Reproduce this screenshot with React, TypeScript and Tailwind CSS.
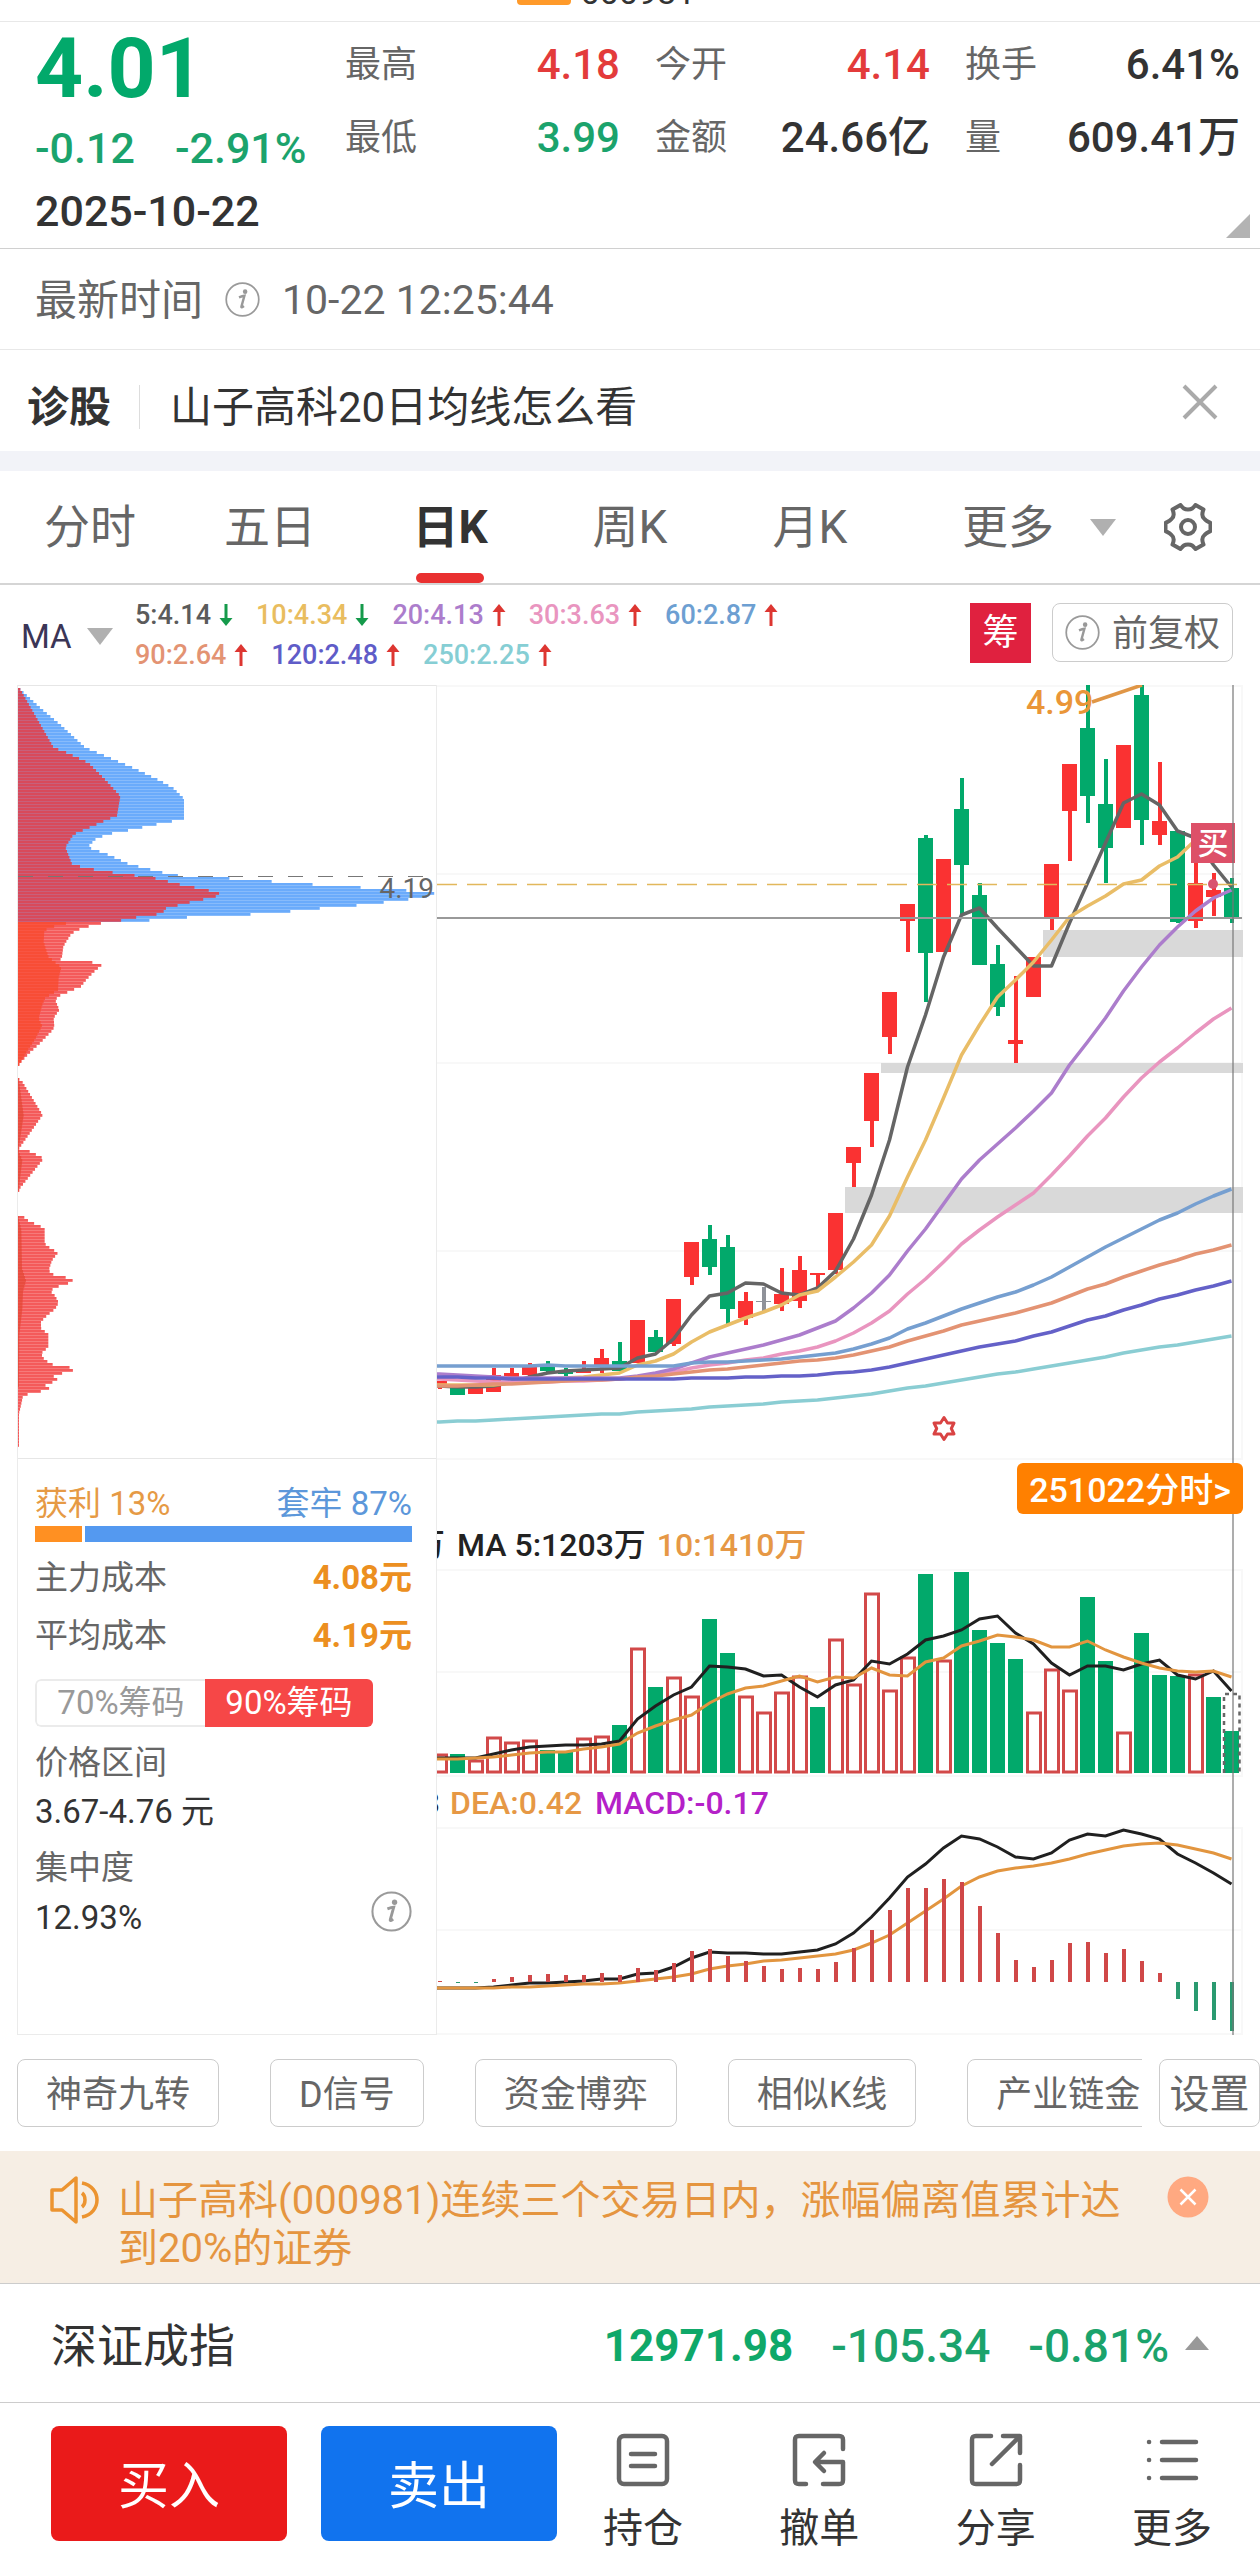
import { ReactNode } from "react";

type Candle = [color: string, top: number, bottom: number, high: number, low: number];

const RED = "#fa3232";
const GREEN = "#02a96b";
const GRAY = "#8f9299";

const candles: Candle[] = [
  [RED, 1381, 1384, 1381, 1389],
  [GREEN, 1387, 1395, 1387, 1395],
  [RED, 1388, 1394, 1388, 1394],
  [RED, 1375, 1392, 1368, 1392],
  [RED, 1373, 1377, 1368, 1380],
  [RED, 1367, 1375, 1363, 1376],
  [GREEN, 1366, 1371, 1361, 1373],
  [GREEN, 1372, 1374, 1368, 1376],
  [RED, 1369, 1373, 1361, 1373],
  [RED, 1358, 1366, 1349, 1373],
  [GREEN, 1361, 1371, 1342, 1371],
  [RED, 1320, 1363, 1320, 1363],
  [GREEN, 1337, 1352, 1330, 1352],
  [RED, 1299, 1344, 1299, 1346],
  [RED, 1242, 1277, 1242, 1285],
  [GREEN, 1239, 1267, 1225, 1275],
  [GREEN, 1247, 1309, 1235, 1324],
  [RED, 1301, 1318, 1292, 1325],
  [GRAY, 1301, 1302, 1287, 1311],
  [RED, 1294, 1304, 1268, 1311],
  [RED, 1270, 1301, 1256, 1308],
  [RED, 1273, 1275, 1273, 1287],
  [RED, 1213, 1270, 1213, 1274],
  [RED, 1147, 1163, 1147, 1187],
  [RED, 1073, 1121, 1073, 1147],
  [RED, 992, 1037, 992, 1054],
  [RED, 904, 921, 904, 952],
  [GREEN, 838, 953, 835, 1002],
  [RED, 859, 952, 859, 952],
  [GREEN, 809, 865, 778, 916],
  [GREEN, 895, 965, 883, 965],
  [GREEN, 964, 1007, 945, 1016],
  [RED, 1040, 1044, 976, 1063],
  [RED, 957, 997, 957, 997],
  [RED, 864, 918, 864, 930],
  [RED, 764, 811, 764, 861],
  [GREEN, 728, 796, 685, 823],
  [GREEN, 804, 848, 759, 883],
  [RED, 745, 828, 745, 828],
  [GREEN, 695, 820, 685, 845],
  [RED, 821, 835, 762, 845],
  [GREEN, 831, 922, 831, 923],
  [RED, 883, 921, 850, 928],
  [RED, 890, 897, 873, 916],
  [GREEN, 888, 919, 878, 923],
];

const maLines = [
  { color: "#8acdd3", ys: [1422, 1421, 1421, 1420, 1419, 1418, 1417, 1416, 1415, 1414, 1414, 1412, 1411, 1410, 1409, 1407, 1406, 1405, 1404, 1402, 1401, 1400, 1398, 1396, 1394, 1391, 1388, 1386, 1383, 1380, 1377, 1374, 1372, 1369, 1366, 1363, 1360, 1357, 1353, 1350, 1347, 1345, 1342, 1339, 1336] },
  { color: "#656565", ys: [1386, 1387, 1387, 1386, 1382, 1377, 1373, 1371, 1370, 1369, 1368, 1358, 1354, 1339, 1315, 1296, 1293, 1283, 1284, 1293, 1295, 1288, 1271, 1239, 1195, 1140, 1067, 1015, 957, 915, 908, 928, 947, 966, 966, 923, 883, 843, 803, 794, 805, 831, 838, 865, 887] },
  { color: "#e9bd67", ys: [1385, 1385, 1385, 1385, 1383, 1381, 1379, 1378, 1377, 1375, 1373, 1365, 1361, 1354, 1342, 1332, 1325, 1318, 1312, 1305, 1295, 1291, 1277, 1262, 1245, 1216, 1177, 1140, 1098, 1055, 1025, 997, 980, 962, 940, 917, 906, 896, 884, 880, 866, 857, 840, 839, 840] },
  { color: "#e995bf", ys: [1379, 1380, 1381, 1382, 1382, 1382, 1382, 1381, 1381, 1380, 1379, 1377, 1375, 1372, 1368, 1365, 1363, 1360, 1358, 1354, 1351, 1347, 1341, 1333, 1323, 1311, 1294, 1279, 1262, 1244, 1230, 1217, 1205, 1193, 1175, 1156, 1136, 1118, 1097, 1078, 1062, 1048, 1033, 1019, 1008] },
  { color: "#ac7dcc", ys: [1374, 1375, 1376, 1377, 1378, 1378, 1378, 1378, 1378, 1378, 1378, 1376, 1373, 1369, 1363, 1357, 1353, 1349, 1345, 1340, 1335, 1328, 1321, 1308, 1293, 1275, 1251, 1229, 1204, 1179, 1160, 1144, 1128, 1111, 1093, 1065, 1042, 1018, 991, 967, 945, 927, 911, 898, 890] },
  { color: "#769fd0", ys: [1366, 1366, 1366, 1366, 1366, 1366, 1365, 1366, 1366, 1366, 1366, 1366, 1366, 1366, 1363, 1362, 1362, 1361, 1360, 1359, 1357, 1355, 1353, 1349, 1344, 1338, 1329, 1323, 1316, 1309, 1303, 1297, 1292, 1285, 1277, 1267, 1257, 1247, 1238, 1229, 1220, 1213, 1204, 1196, 1189] },
  { color: "#e39373", ys: [1386, 1386, 1385, 1384, 1384, 1383, 1382, 1381, 1380, 1380, 1379, 1377, 1376, 1374, 1372, 1370, 1369, 1367, 1365, 1363, 1361, 1360, 1358, 1355, 1351, 1347, 1341, 1336, 1331, 1325, 1321, 1317, 1313, 1308, 1303, 1296, 1289, 1284, 1277, 1271, 1265, 1260, 1254, 1250, 1245] },
  { color: "#6461c8", ys: [1377, 1377, 1378, 1378, 1379, 1379, 1379, 1379, 1379, 1379, 1379, 1379, 1379, 1379, 1378, 1378, 1378, 1377, 1377, 1376, 1376, 1375, 1373, 1372, 1370, 1367, 1363, 1359, 1355, 1351, 1347, 1344, 1341, 1336, 1332, 1326, 1320, 1316, 1310, 1305, 1299, 1295, 1290, 1286, 1281] },
];

const volumeTops = [1754, 1754, 1760, 1737, 1742, 1740, 1750, 1752, 1738, 1736, 1725, 1648, 1687, 1677, 1696, 1619, 1653, 1696, 1712, 1692, 1676, 1707, 1639, 1684, 1593, 1690, 1657, 1574, 1660, 1572, 1630, 1643, 1659, 1712, 1669, 1690, 1597, 1661, 1732, 1633, 1675, 1676, 1674, 1697, 1731];
const volumeGreen = [1, 6, 7, 10, 12, 15, 16, 21, 27, 29, 30, 31, 32, 36, 37, 39, 40, 41, 43, 44];
const volumeMa5 = [1758, 1758, 1758, 1754, 1750, 1747, 1746, 1745, 1745, 1744, 1741, 1719, 1706, 1695, 1687, 1666, 1667, 1669, 1676, 1675, 1687, 1697, 1685, 1680, 1661, 1664, 1654, 1640, 1636, 1630, 1619, 1616, 1633, 1644, 1663, 1675, 1666, 1666, 1670, 1664, 1660, 1675, 1679, 1671, 1691];
const volumeMa10 = [1759, 1759, 1758, 1757, 1755, 1753, 1752, 1752, 1749, 1747, 1744, 1733, 1726, 1720, 1715, 1703, 1694, 1688, 1686, 1681, 1676, 1682, 1677, 1678, 1668, 1675, 1676, 1662, 1658, 1646, 1641, 1635, 1637, 1640, 1647, 1647, 1641, 1650, 1657, 1663, 1668, 1671, 1672, 1671, 1677];

const macdZero = 1982;
const macdBars = [1981, 1983, 1983, 1979, 1977, 1975, 1974, 1975, 1975, 1973, 1975, 1968, 1970, 1963, 1951, 1949, 1956, 1961, 1966, 1969, 1968, 1969, 1962, 1948, 1930, 1910, 1888, 1888, 1879, 1882, 1906, 1933, 1960, 1967, 1960, 1943, 1942, 1953, 1949, 1961, 1973, 1999, 2011, 2020, 2031];
const dif = [1988, 1988, 1988, 1987, 1985, 1983, 1983, 1982, 1981, 1979, 1979, 1974, 1973, 1967, 1958, 1952, 1953, 1953, 1954, 1954, 1952, 1950, 1944, 1933, 1917, 1898, 1877, 1864, 1848, 1836, 1839, 1847, 1857, 1859, 1853, 1840, 1834, 1836, 1830, 1834, 1839, 1854, 1863, 1873, 1884];
const dea = [1988, 1988, 1988, 1988, 1987, 1987, 1986, 1985, 1984, 1984, 1983, 1981, 1979, 1977, 1974, 1969, 1966, 1964, 1961, 1960, 1958, 1956, 1954, 1950, 1943, 1935, 1923, 1911, 1899, 1886, 1877, 1871, 1868, 1866, 1863, 1859, 1854, 1850, 1846, 1844, 1843, 1845, 1849, 1853, 1859];

const xAt = (i: number) => 439.5 + i * 18;
const toPoints = (ys: number[]) => ys.map((y, i) => `${xAt(i)},${y}`).join(" ");

// chip distribution outlines: [price level, amount], scaled to the panel by levelY and amountX
const trappedOuter = [[36, 60], [75, 125], [105, 180], [150, 255], [165, 310], [190, 400], [215, 480], [230, 520], [250, 551], [290, 551], [300, 472], [312, 385], [320, 320], [330, 285], [345, 262], [360, 325], [378, 385], [392, 470], [400, 520], [404, 635], [410, 770], [417, 910], [423, 1058], [429, 1200], [434, 1307], [441, 1285], [447, 1230], [453, 1155], [460, 1058], [465, 960], [471, 870], [477, 748], [483, 552], [490, 422]];
const trappedInner = [[36, 60], [150, 160], [160, 200], [180, 265], [215, 318], [245, 360], [283, 350], [300, 290], [320, 220], [345, 195], [378, 215], [386, 255], [392, 312], [398, 370], [404, 450], [410, 490], [417, 530], [423, 575], [429, 620], [435, 657], [441, 650], [447, 612], [453, 570], [460, 527], [465, 497], [471, 490], [477, 468], [483, 405], [490, 352]];
const profitOuter = [
  [[494, 305], [502, 255], [508, 230], [515, 213], [530, 198], [540, 189], [560, 185], [566, 180], [568, 245], [574, 308], [590, 280], [605, 258], [618, 242], [630, 200], [637, 175], [645, 165], [664, 177], [680, 160], [698, 162], [705, 155], [730, 118], [750, 85], [770, 57]],
  [[799, 55], [805, 66], [870, 127], [935, 57]],
  [[944, 88], [950, 122], [958, 127], [980, 100], [1015, 57]],
  [[1073, 72], [1080, 93], [1086, 113], [1092, 133], [1122, 133], [1130, 148], [1140, 173], [1155, 155], [1175, 145], [1183, 160], [1190, 207], [1196, 221], [1202, 195], [1208, 165], [1215, 150], [1225, 165], [1238, 175], [1250, 165], [1262, 142], [1275, 122], [1288, 122], [1300, 144], [1325, 144], [1338, 122], [1350, 133], [1360, 160], [1366, 220], [1372, 217], [1378, 175], [1384, 155], [1390, 177], [1396, 147], [1402, 130], [1408, 155], [1415, 93], [1421, 68], [1445, 60], [1455, 56], [1515, 56]],
];
const profitInner = [
  [[494, 200], [500, 163], [508, 132], [530, 130], [545, 137], [560, 145], [580, 183], [600, 175], [625, 173], [640, 135], [655, 125], [680, 115], [695, 125], [720, 105], [740, 85], [770, 57]],
  [[799, 55], [870, 70], [935, 55]],
  [[944, 56], [958, 66], [1015, 55]],
  [[1073, 55], [1095, 63], [1170, 65], [1195, 77], [1215, 68], [1250, 66], [1300, 57], [1400, 56]],
];

const levelY = (level: number) => (level - 30) / 1.96;
const amountX = (amount: number) => (amount - 53) / 3;

const widthAt = (profile: number[][], y: number) => {
  for (let i = 1; i < profile.length; i++) {
    const y0 = levelY(profile[i - 1][0]);
    const y1 = levelY(profile[i][0]);
    if (y <= y1) {
      const t = Math.max(0, (y - y0) / (y1 - y0));
      return amountX(profile[i - 1][1] + (profile[i][1] - profile[i - 1][1]) * t);
    }
  }
  return amountX(profile[profile.length - 1][1]);
};

interface IRows {
  profile: number[][];
  color: string;
}

const Rows = ({ profile, color }: IRows) => {
  const first = Math.round(levelY(profile[0][0]) / 3);
  const last = Math.round(levelY(profile[profile.length - 1][0]) / 3);
  return (
    <g fill={color}>
      {Array.from({ length: last - first + 1 }, (_, i) => (first + i) * 3).map((y) => (
        <rect key={y} x={0} y={y - 1} width={widthAt(profile, y)} height={2.8} />
      ))}
    </g>
  );
};

const InfoIcon = ({ className }: { className: string }) => (
  <svg viewBox="0 0 40 40" className={className} fill="none">
    <circle cx="20" cy="20" r="18.6" stroke="#9a9a9a" strokeWidth="2" />
    <circle cx="23" cy="11" r="2.6" fill="#999" />
    <path d="M16 17.5c2.500 -1 4 -1.600 6.200 -1.800L18.800 28c-.3 1.300 .6 1.200 2.800 -.6" stroke="#999" strokeWidth="2.800" />
  </svg>
);

const TriangleDown = ({ className }: { className: string }) => (
  <svg viewBox="0 0 26 17" className={className}>
    <path d="M0 0h26L13 17z" fill="#b0b0b0" />
  </svg>
);

const Quote = ({ label, value, color }: { label: string; value: string; color: string }) => (
  <div className="flex items-center justify-between">
    <dt className="text-[36px] text-[#666]">{label}</dt>
    <dd className={`text-[42px] font-medium ${color}`}>{value}</dd>
  </div>
);

const legendRows = [
  [
    { text: "5:4.14", color: "text-[#5b5b5b]", up: false },
    { text: "10:4.34", color: "text-[#e9bd5f]", up: false },
    { text: "20:4.13", color: "text-[#ac7dcc]", up: true },
    { text: "30:3.63", color: "text-[#e995bf]", up: true },
    { text: "60:2.87", color: "text-[#6d9fd2]", up: true },
  ],
  [
    { text: "90:2.64", color: "text-[#e39373]", up: true },
    { text: "120:2.48", color: "text-[#5f5cc8]", up: true },
    { text: "250:2.25", color: "text-[#86ced4]", up: true },
  ],
];

const Arrow = ({ up }: { up: boolean }) => (
  <svg viewBox="0 0 14 22" className="h-[22px] w-[14px]">
    {up ? (
      <path d="M7 0l6.500 8H8.500V22h-3V8H.5z" fill="#dd3631" />
    ) : (
      <path d="M7 22l6.500 -8H8.500V0h-3v14H.5z" fill="#159a4b" />
    )}
  </svg>
);

const Header = () => (
  <header>
    <div className="flex h-[22px] items-start justify-center border-b border-[#e8e8e8] pr-[48px]">
      <div className="flex h-[5px] items-end gap-[10px] overflow-hidden">
        <span className="h-[5px] w-[54px] rounded-b-sm bg-[#ff9a2a]" />
        <span className="text-[34px] leading-[26px] text-[#333]">000981</span>
      </div>
    </div>
    <section className="relative flex h-[227px] border-b border-[#d0d0d0] pr-5 pl-[35px]">
      <div className="w-[310px] shrink-0">
        <p className="pt-[14px] text-[84px] leading-[66px] font-bold text-[#02a96b]">4.01</p>
        <p className="flex gap-10 pt-6 text-[43px] leading-[44px] font-medium text-[#1ba36c]">
          <span>-0.12</span>
          <span>-2.91%</span>
        </p>
        <p className="pt-[19px] text-[43px] leading-[44px] font-medium whitespace-nowrap text-[#333]">2025-10-22</p>
      </div>
      <dl className="grid h-[153px] flex-1 grid-cols-3 gap-x-[35px] pt-[6px]">
        <Quote label="最高" value="4.18" color="text-[#e33b3b]" />
        <Quote label="今开" value="4.14" color="text-[#e33b3b]" />
        <Quote label="换手" value="6.41%" color="text-[#333]" />
        <Quote label="最低" value="3.99" color="text-[#1ba36c]" />
        <Quote label="金额" value="24.66亿" color="text-[#333]" />
        <Quote label="量" value="609.41万" color="text-[#333]" />
      </dl>
      <svg viewBox="0 0 24 24" className="absolute right-[10px] bottom-[10px] size-6">
        <path d="M24 0v24H0z" fill="#b3b3b3" />
      </svg>
    </section>
    <section className="flex h-[101px] items-center border-b border-[#e8e8e8] px-[35px] text-[#666]">
      <span className="pt-[3px] text-[42px]">最新时间</span>
      <InfoIcon className="ml-[22px] size-[35px]" />
      <time className="ml-[22px] pt-[3px] text-[41px]">10-22 12:25:44</time>
    </section>
    <section className="flex h-[101px] items-center pt-[12px] pr-[42px] pl-[27px] text-[42px] text-[#333]">
      <strong className="pt-[3px] font-bold">诊股</strong>
      <span className="ml-7 h-11 w-px bg-[#ddd]" />
      <a href="#diagnose" className="ml-[30px] pt-[3px]">山子高科20日均线怎么看</a>
      <button aria-label="关闭" className="mb-[10px] ml-auto">
        <svg viewBox="0 0 36 36" className="size-9">
          <path d="M2 2l32 32M34 2L2 34" stroke="#aaa" strokeWidth="4" />
        </svg>
      </button>
    </section>
    <div className="h-5 bg-[#f2f3f8]" />
  </header>
);

const Tabs = () => (
  <nav className="flex h-[114px] border-b-2 border-[#d5d5d5] text-[46px] text-[#666]">
    <button className="w-[180px]">分时</button>
    <button className="w-[180px]">五日</button>
    <button className="relative w-[180px] font-bold text-[#333]">
      日K
      <span className="absolute bottom-0 left-1/2 h-[10px] w-[68px] -translate-x-1/2 rounded-full bg-[#e93030]" />
    </button>
    <button className="w-[180px]">周K</button>
    <button className="w-[180px]">月K</button>
    <button className="ml-auto flex items-center gap-9">
      更多
      <TriangleDown className="h-[17px] w-[26px]" />
    </button>
    <button aria-label="设置" className="mr-12 ml-12">
      <svg viewBox="0 0 48 48" className="size-12" fill="none" stroke="#666" strokeWidth="4" strokeLinejoin="round">
        <path d="M16.500 2C19 5 20 6.500 24 6.500S29 5 31.500 2L39.500 6.500C38 10 38 14 40.500 16C42.500 18.500 45 19 46.500 20V28C45 29 42.500 29.500 40.500 32C38 34 38 38 39.500 41.500L31.500 46C29 43 28 41.500 24 41.500S19 43 16.500 46L8.500 41.500C10 38 10 34 7.500 32C5.500 29.500 3 29 1.500 28V20C3 19 5.500 18.500 7.500 16C10 14 10 10 8.500 6.500Z" />
        <circle cx="24" cy="24" r="7" />
      </svg>
    </button>
  </nav>
);

const Legend = () => (
  <section className="flex h-[100px] items-center pr-[27px] pb-[5px] pl-[21px]">
    <label className="flex w-[114px] items-center justify-between pt-2 pr-[22px]">
      <select aria-label="指标" className="w-[54px] appearance-none text-[33px] text-[#3b3556]">
        <option>MA</option>
      </select>
      <TriangleDown className="h-[17px] w-[26px] shrink-0" />
    </label>
    <div className="flex flex-col gap-[10px] pt-1">
      {legendRows.map((row, i) => (
        <ul key={i} className="flex gap-[23px] text-[27px] leading-[30px] font-medium">
          {row.map((item) => (
            <li key={item.text} className={`flex items-center gap-2 ${item.color}`}>
              {item.text}
              <Arrow up={item.up} />
            </li>
          ))}
        </ul>
      ))}
    </div>
    <button className="ml-auto h-[60px] w-[61px] bg-[#e0213f] text-[36px] text-white">筹</button>
    <button className="ml-[21px] flex h-[59px] w-[181px] items-center gap-[12px] rounded-lg border border-[#ccc] pl-3 text-[36px] text-[#666]">
      <InfoIcon className="size-[35px] shrink-0" />
      <span className="pt-[3px] whitespace-nowrap">前复权</span>
    </button>
  </section>
);

const Cost = ({ label, value }: { label: string; value: string }) => (
  <p className="flex justify-between">
    <span>{label}</span>
    <span className="font-bold text-[#ec8f20]">{value}</span>
  </p>
);

const ChipPanel = () => (
  <aside className="w-[420px] shrink-0 border-x border-b border-[#ebebeb]">
    <svg viewBox="0 0 418 772" className="block w-full border-y border-[#e6e6e6]">
      <Rows profile={trappedOuter} color="#6aabfb" />
      <Rows profile={trappedInner} color="#d84a5b" />
      {profitOuter.map((p, i) => (
        <Rows key={i} profile={p} color="#f45a5a" />
      ))}
      {profitInner.map((p, i) => (
        <Rows key={i} profile={p} color={i === 0 ? "#f84d36" : "#e84c3e"} />
      ))}
      <path d="M0 190.500H418" stroke="#777" strokeDasharray="15 15" />
      <text x="416" y="212" textAnchor="end" fill="#666" className="text-[28px]">4.19</text>
    </svg>
    <div className="px-[17px] pt-[27px] text-[33px] leading-[36px] text-[#666]">
      <p className="mr-[7px] flex justify-between">
        <span className="text-[#e69a45]">获利 13%</span>
        <span className="text-[#5c97da]">套牢 87%</span>
      </p>
      <div className="mt-[4px] mr-[7px] flex gap-[3px]">
        <span className="h-[16px] w-[47px] bg-[#ff9022]" />
        <span className="h-[16px] flex-1 bg-[#5499f0]" />
      </div>
      <div className="mt-[18px] mr-[7px] flex flex-col gap-[22px]">
        <Cost label="主力成本" value="4.08元" />
        <Cost label="平均成本" value="4.19元" />
      </div>
      <div className="mt-[25px] flex h-[48px] w-[338px] overflow-hidden rounded-md">
        <button className="flex-1 rounded-l-md border-2 border-r-0 border-[#ebebeb] text-[#999]">70%筹码</button>
        <button className="flex-1 bg-[#f64747] text-white">90%筹码</button>
      </div>
      <p className="mt-[18px]">价格区间</p>
      <p className="mt-[13px] text-[#333]">3.67-4.76 元</p>
      <p className="mt-[20px]">集中度</p>
      <div className="mr-[7px] flex items-center justify-between text-[#333]">
        <span className="pt-[14px]">12.93%</span>
        <InfoIcon className="size-[41px]" />
      </div>
    </div>
  </aside>
);

const PriceChart = () => (
  <svg viewBox="437 685 806 775" className="block w-full" fill="none">
    <path d="M437 686H1242V1459H437M437 874H1242M437 1063H1242M437 1251H1242" stroke="#f8f8f8" strokeWidth="2" />
    <g fill="#d9d9d9">
      <rect x="1043" y="930" width="200" height="27" />
      <rect x="881" y="1063" width="362" height="10" />
      <rect x="845" y="1187" width="398" height="26" />
    </g>
    {candles.map(([color, top, bottom, high, low], i) => (
      <g key={i} fill={color}>
        <rect x={xAt(i) - 1.5} y={high} width={4} height={low - high} />
        <rect x={xAt(i) - 7.5} y={top} width={15} height={bottom - top} />
      </g>
    ))}
    {maLines.map((line) => (
      <polyline key={line.color} points={`437,${line.ys[0]} ${toPoints(line.ys)}`} stroke={line.color} strokeWidth="3.500" strokeLinejoin="round" />
    ))}
    <path d="M437 884.500H1237" stroke="#e2b85c" strokeWidth="1.500" strokeDasharray="20 10" />
    <path d="M437 918H1242" stroke="#999" strokeWidth="2" />
    <path d="M1092 702L1142 685" stroke="#e09646" strokeWidth="3.500" />
    <text x="1026" y="714" fill="#ea9638" className="text-[34px] font-medium">4.99</text>
    <rect x="1191" y="823" width="44" height="40" fill="#dd5068" />
    <text x="1213" y="854" textAnchor="middle" fill="#fff" className="text-[31px] font-medium">买</text>
    <circle cx="1213" cy="884" r="5" fill="#d9536f" />
    <path d="M944 1417.500l3.500 5.500h6.500l-2.700 5.500 2.700 5.500h-6.500l-3.500 5.500-3.500-5.500h-6.500l2.700-5.500-2.700-5.500h6.500z" stroke="#d94343" strokeWidth="3" strokeLinejoin="round" />
  </svg>
);

const VolumeChart = () => (
  <svg viewBox="437 1569 806 208" className="block w-full" fill="none">
    <path d="M437 1570H1242V1776H437M437 1672H1242" stroke="#f8f8f8" strokeWidth="2" />
    {volumeTops.map((top, i) =>
      volumeGreen.includes(i) ? (
        <rect key={i} x={xAt(i) - 7.5} y={top} width={15} height={1773 - top} fill={GREEN} />
      ) : (
        <rect key={i} x={xAt(i) - 6} y={top + 1} width={13} height={1772 - top - 1} stroke="#d24949" strokeWidth="3" />
      ),
    )}
    <path d="M1224 1773V1694H1239.500V1773" stroke="#666" strokeWidth="2.500" strokeDasharray="4 4" />
    <polyline points={`437,1758 ${toPoints(volumeMa5)}`} stroke="#202020" strokeWidth="3" />
    <polyline points={`437,1759 ${toPoints(volumeMa10)}`} stroke="#e2953f" strokeWidth="3" />
  </svg>
);

const MacdChart = () => (
  <svg viewBox="437 1827 806 208" className="block w-full" fill="none">
    <path d="M437 1828H1242V2034H437M437 1930H1242" stroke="#f8f8f8" strokeWidth="2" />
    <polyline points={`437,1988 ${toPoints(dif)}`} stroke="#202020" strokeWidth="3" />
    <polyline points={`437,1988 ${toPoints(dea)}`} stroke="#e2953f" strokeWidth="3" />
    {macdBars.map((y, i) => (
      <rect
        key={i}
        x={xAt(i) - 1.5}
        y={Math.min(y, macdZero)}
        width={4}
        height={Math.abs(y - macdZero)}
        fill={y > macdZero ? "#2a9a70" : "#d04848"}
      />
    ))}
  </svg>
);

const Charts = () => (
  <main className="flex px-[17px]">
    <ChipPanel />
    <div className="relative min-w-0 flex-1">
      <PriceChart />
      <span className="absolute top-0 bottom-0 left-[98.6%] w-[2px] bg-[#777]/60" />
      <div className="relative flex h-[54px] items-end justify-end">
        <button className="h-[51px] w-[226px] rounded-md bg-[#ff8000] pt-[3px] text-[34px] font-medium whitespace-nowrap text-white">251022分时&gt;</button>
      </div>
      <p className="flex h-[55px] items-center pt-[6px] text-[32px] font-medium whitespace-nowrap text-[#222]">
        <span className="mr-3 flex w-2 justify-end overflow-hidden">万</span>
        <span>MA 5:1203万</span>
        <span className="ml-[11px] text-[#e69845]">10:1410万</span>
      </p>
      <VolumeChart />
      <p className="flex h-[50px] items-center pt-[2px] text-[32px] font-medium whitespace-nowrap text-[#222]">
        <span className="mr-[10px] flex w-[3px] justify-end overflow-hidden">3</span>
        <span className="text-[#e69845]">DEA:0.42</span>
        <span className="ml-[13px] text-[#b421c8]">MACD:-0.17</span>
      </p>
      <MacdChart />
    </div>
  </main>
);

const tools = ["神奇九转", "D信号", "资金博弈", "相似K线", "产业链金"];

const Tools = () => (
  <section className="flex justify-between py-6 pl-[17px]">
    <div className="flex min-w-0 flex-1 gap-[51px] overflow-hidden">
      {tools.map((tool) => (
        <button key={tool} className="h-[68px] shrink-0 rounded-lg border border-[#ccc] px-[28px] pt-[3px] text-[36px] text-[#666]">
          {tool}
        </button>
      ))}
    </div>
    <button className="ml-[17px] h-[68px] w-[101px] shrink-0 rounded-lg border border-[#ccc] pt-[3px] text-[40px] whitespace-nowrap text-[#666]">设置</button>
  </section>
);

const Notice = () => (
  <section className="flex h-[133px] items-start border-b border-[#ccc] bg-[#f6eee4] pt-[23px] pr-[51px] pl-[49px]">
    <svg viewBox="0 0 50 48" className="mt-[2px] h-12 w-[50px] shrink-0" fill="none" stroke="#ec9430" strokeWidth="3.500" strokeLinejoin="round">
      <path d="M3 14h10L27 2v44L13 34H3z" />
      <path d="M33 17c4 3 4 11 0 14M33 7c20 4 20 30 0 34" />
    </svg>
    <p className="ml-[19px] flex-1 pt-[3px] text-[40px] leading-[48px] text-[#e5953f]">山子高科(000981)连续三个交易日内，涨幅偏离值累计达到20%的证券</p>
    <button aria-label="关闭" className="mt-[2px] ml-[16px] shrink-0">
      <svg viewBox="0 0 42 42" className="size-[42px]">
        <circle cx="21" cy="21" r="20.500" fill="#ffa981" />
        <path d="M13.500 13.500l15 15M28.500 13.500l-15 15" stroke="#fff" strokeWidth="2.500" />
      </svg>
    </button>
  </section>
);

const IndexBar = () => (
  <section className="flex h-[119px] items-center border-b border-[#ccc] pt-[6px] pr-[51px] pl-[51px] text-[46px]">
    <span className="text-[#333]">深证成指</span>
    <span className="ml-auto text-[44px] font-bold text-[#0fa869]">12971.98</span>
    <span className="ml-[38px] font-medium text-[#1ba36c]">-105.34</span>
    <span className="ml-[38px] font-medium text-[#1ba36c]">-0.81%</span>
    <svg viewBox="0 0 24 14" className="mb-[6px] ml-4 h-[14px] w-6">
      <path d="M12 0l12 14H0z" fill="#999" />
    </svg>
  </section>
);

const Action = ({ label, children }: { label: string; children: ReactNode }) => (
  <button className="flex w-20 flex-col items-center gap-[22px] text-[40px] whitespace-nowrap text-[#333]">
    <svg viewBox="0 0 54 54" className="size-[54px]" fill="none" stroke="#666" strokeWidth="4.500" strokeLinecap="round" strokeLinejoin="round">
      {children}
    </svg>
    {label}
  </button>
);

const BottomBar = () => (
  <footer className="flex h-[162px] items-start pt-[23px] pr-[48px] pl-[51px]">
    <button className="h-[115px] w-[236px] shrink-0 rounded-lg bg-[#ea1a1a] pt-[5px] text-[51px] text-white">买入</button>
    <button className="ml-[34px] h-[115px] w-[236px] shrink-0 rounded-lg bg-[#1173ee] pt-[5px] text-[51px] text-white">卖出</button>
    <div className="flex flex-1 justify-between pt-[7px] pl-[46px]">
      <Action label="持仓">
        <rect x="3" y="3" width="48" height="48" rx="5" />
        <path d="M15 21h24M15 33h24" />
      </Action>
      <Action label="撤单">
        <path d="M51 16V7c0-3-1-4-4-4H7C4 3 3 4 3 7v40c0 3 1 4 4 4h7" />
        <path d="M32 20l-9 9 9 9M24 29h27v18c0 3-1 4-4 4H31" />
      </Action>
      <Action label="分享">
        <path d="M22 3H7C4 3 3 4 3 7v40c0 3 1 4 4 4h40c3 0 4-1 4-4V32" />
        <path d="M34 3h17v17M49 5L23 31" />
      </Action>
      <Action label="更多">
        <path d="M4 9h.1M4 27h.1M4 45h.1M17 9h34M17 27h34M17 45h34" />
      </Action>
    </div>
  </footer>
);

export default function App() {
  return (
    <div className="w-full bg-white font-['Roboto','Noto_Sans_CJK_SC',sans-serif] leading-none">
      <Header />
      <Tabs />
      <Legend />
      <Charts />
      <Tools />
      <Notice />
      <IndexBar />
      <BottomBar />
    </div>
  );
}
